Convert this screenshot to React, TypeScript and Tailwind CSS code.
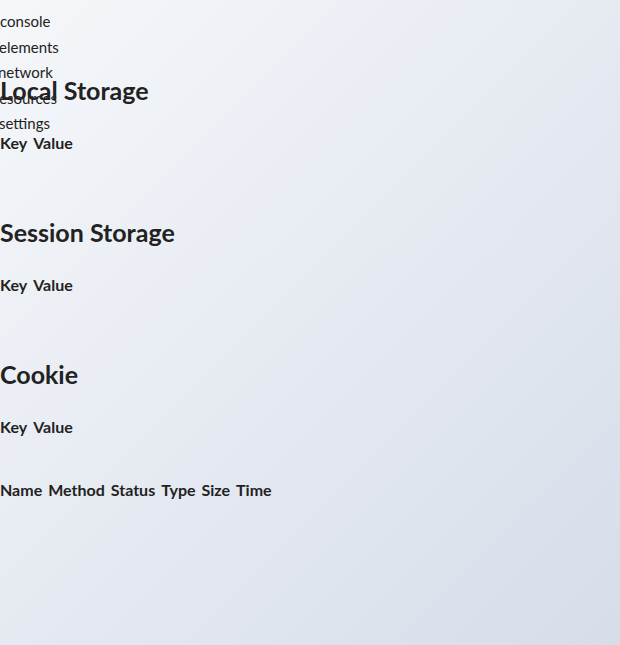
const navItems = [
  { label: "console", offset: "ml-0" },
  { label: "elements", offset: "-ml-px" },
  { label: "network", offset: "-ml-[2px]" },
  { label: "resources", offset: "-ml-[6px]" },
  { label: "settings", offset: "-ml-px" },
];

const storageSections = ["Local Storage", "Session Storage", "Cookie"];

const networkColumns = ["Name", "Method", "Status", "Type", "Size", "Time"];

const App: React.FC = () => {
  return (
    <div className="relative min-h-screen overflow-hidden bg-[linear-gradient(135deg,#f5f7fa_0%,#d6dde9_100%)] font-['Lato',sans-serif] text-[#222222]">
      {/* devtools tab list floats over the panels */}
      <nav className="absolute left-0 top-[9px] z-10">
        <ul className="flex flex-col">
          {navItems.map((item) => (
            <li
              key={item.label}
              className={`text-[15px] leading-[25.5px] ${item.offset}`}
            >
              {item.label}
            </li>
          ))}
        </ul>
      </nav>

      <main className="flex flex-col gap-[61px] pt-[74px]">
        {storageSections.map((title) => (
          <section key={title} className="flex flex-col gap-[25px]">
            <h2 className="text-[25px] font-bold leading-8">{title}</h2>
            <div className="flex gap-[6px] text-base font-bold leading-6">
              <span>Key</span>
              <span>Value</span>
            </div>
          </section>
        ))}
      </main>

      <section className="mt-[39px] flex gap-[6px] text-base font-bold leading-6">
        {networkColumns.map((col) => (
          <span key={col}>{col}</span>
        ))}
      </section>
    </div>
  );
};

export default App;
